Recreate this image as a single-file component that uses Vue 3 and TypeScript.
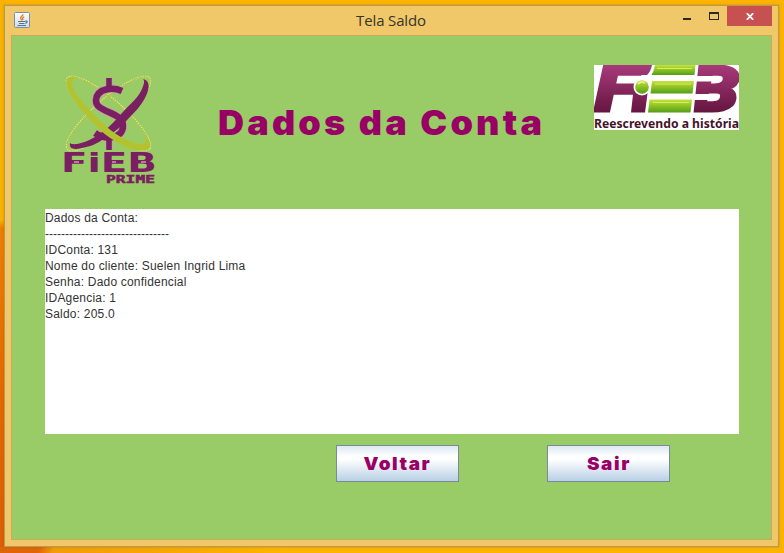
<script setup lang="ts">
interface Account {
  id: number
  client: string
  agency: number
  balance: string
}

const account: Account = { id: 131, client: 'Suelen Ingrid Lima', agency: 1, balance: '205.0' }

const rule = '-------------------------------'
const fields: string[] = [
  `IDConta: ${account.id}`,
  `Nome do cliente: ${account.client}`,
  'Senha: Dado confidencial',
  `IDAgencia: ${account.agency}`,
  `Saldo: ${account.balance}`,
]
const actions: string[] = ['Voltar', 'Sair']
</script>

<template>
  <div class="desktop">
    <div class="window">
      <header class="titlebar">
        <svg class="java" width="16" height="16" viewBox="0 0 16 16">
          <defs>
            <linearGradient id="tile" x1="0" y1="0" x2="0" y2="1">
              <stop offset="0" stop-color="#fdfdfd" />
              <stop offset="1" stop-color="#d3dbe3" />
            </linearGradient>
          </defs>
          <rect x=".5" y=".5" width="15" height="15" rx="1" fill="url(#tile)" stroke="#7891a8" />
          <path d="M9 2.200C9 4 6 4.800 6.700 6.600L8 8.500M10.200 4.800C8 5.800 8.300 6.500 9.200 8" fill="none" stroke="#e9772b" stroke-width="1.300" />
          <path d="M4 9.500h7M5 11.500h5.500M3.500 13.500h8.500M11 9.200c3-1 2.700 2 .3 2" fill="none" stroke="#55758e" stroke-width="1.200" />
        </svg>
        <span class="caption">Tela Saldo</span>
        <div class="controls">
          <span class="minimize"></span>
          <span class="maximize"></span>
          <span class="close">
            <svg width="8" height="7" viewBox="0 0 8 7">
              <path d="M.8.2 7.200 6.800M7.200.2.8 6.800" stroke="#fff" stroke-width="1.800" />
            </svg>
          </span>
        </div>
      </header>

      <main class="client">
        <section class="banner">
          <svg class="prime" width="96" height="112" viewBox="0 0 96 112">
            <g fill="none">
              <g stroke="#e3edb4" stroke-width="1.800" stroke-dasharray="1.500 1">
                <ellipse cx="45.500" cy="38.500" rx="54" ry="14" transform="rotate(-41 45.500 38.500)" />
                <ellipse cx="45.500" cy="38.500" rx="54" ry="14" transform="rotate(41 45.500 38.500)" />
              </g>
              <g stroke="#b3c32f" stroke-width="1">
                <ellipse cx="45.500" cy="38.500" rx="53.500" ry="13.500" transform="rotate(-41 45.500 38.500)" />
                <ellipse cx="45.500" cy="38.500" rx="53.500" ry="13.500" transform="rotate(41 45.500 38.500)" />
              </g>
              <path d="M46 3V13M46 62V75" stroke="#c79bb0" stroke-width="7" />
              <path d="M59 16C50 12 34 13 33 25C32 38 60 36 60 51C60 64 42 65 32 58" stroke="#c79bb0" stroke-width="8" />
              <path d="M46 3V13M46 62V75" stroke="#7a1f61" stroke-width="5.500" />
              <path d="M59 16C50 12 34 13 33 25C32 38 60 36 60 51C60 64 42 65 32 58" stroke="#7a1f61" stroke-width="6.500" />
            </g>
            <path d="M80 4C86 5 88 12 82 23C77 32 71 38 65 44C57 53 50 58 42 63C34 69 26 72 19 73C11 75 6 74 7 68C10 71 22 68 32 62C43 56 52 46 59 38C68 28 75 23 79 14C81 9 82 6 80 4Z" fill="#7a1f61" />
            <path d="M16 3C6 0 1 4 4 12C7 20 17 35 32 50C39 57 45 62 52 66C60 71 66 74 73 75C83 76 88 75 87 67L82 60C84 65 83 70 78 69C66 68 55 61 45 53C36 45 30 39 25 33C17 25 11 17 9.500 11C8 5 10 3 16 3Z" fill="#b3c32f" />
            <text class="prime-name" x="-2" y="96.500" textLength="96" lengthAdjust="spacingAndGlyphs">FiEB</text>
            <path d="M11 87H16M49 87H53M78 87H83" stroke="#c79bb0" stroke-width="1.500" />
            <text class="prime-tag" x="43" y="108" textLength="49" lengthAdjust="spacingAndGlyphs">PRIME</text>
          </svg>

          <h1>Dados da Conta</h1>

          <svg class="fieb" width="145" height="65" viewBox="0 0 145 65">
            <defs>
              <linearGradient id="wine" gradientUnits="userSpaceOnUse" x1="0" y1="0" x2="0" y2="48">
                <stop offset="0" stop-color="#a83a7c" />
                <stop offset="1" stop-color="#64153f" />
              </linearGradient>
              <linearGradient id="lime" x1="0" y1="0" x2="0" y2="1">
                <stop offset="0" stop-color="#c6e23c" />
                <stop offset=".35" stop-color="#9dcb28" />
                <stop offset="1" stop-color="#559d18" />
              </linearGradient>
            </defs>
            <rect width="145" height="65" fill="#fff" />
            <text class="mark" x="1" y="46" textLength="42" lengthAdjust="spacingAndGlyphs">F</text>
            <path d="M20 0H58Q57 6 53 10H18Z" fill="url(#wine)" />
            <text class="mark" x="96" y="46" textLength="49" lengthAdjust="spacingAndGlyphs">B</text>
            <path d="M39.500 25H54L51 47.500H37Z" fill="url(#wine)" />
            <path d="M90 0H104.500L99.500 48H90Z" fill="#fff" />
            <path d="M103 11H123Q127 13.500 123 16.500H101ZM101 29H122Q126 31.500 122 35H99Z" fill="#fff" />
            <circle cx="48" cy="22" r="8.500" fill="#fff" />
            <circle cx="48" cy="22" r="6.800" fill="url(#lime)" />
            <g fill="url(#lime)">
              <path d="M61 0H101.500L100.500 10H57.500Q60 6 61 0Z" />
              <path d="M58 16H100L98.500 28.500H56.500Z" />
              <path d="M55.500 34.500H98L96.500 47.500H54Z" />
            </g>
            <path d="M63 3.500H98M61 19H97M59 37.500H95" stroke="#d4ec66" stroke-width="1.200" />
            <path d="M44 19Q47 15.500 51 18" fill="none" stroke="#e4f18b" stroke-width="2" />
            <text class="slogan" x="0" y="63" textLength="145" lengthAdjust="spacingAndGlyphs">Reescrevendo a história</text>
          </svg>
        </section>

        <section class="report">
          <p>Dados da Conta:</p>
          <p class="rule">{{ rule }}</p>
          <p v-for="field in fields" :key="field">{{ field }}</p>
        </section>

        <nav class="actions">
          <button v-for="action in actions" :key="action" type="button">
            <span>{{ action }}</span>
          </button>
        </nav>
      </main>
    </div>
  </div>
</template>

<style>
body {
  margin: 0;
}
</style>

<style scoped>
.desktop {
  box-sizing: border-box;
  width: 784px;
  height: 553px;
  padding: 5px 5px 6px 4px;
  overflow: hidden;
  background:
    linear-gradient(115deg, #df6508 0 36px, #f29c07 50px, transparent 260px) 0 547px / 784px 6px no-repeat,
    linear-gradient(#f8b300 0 220px, #ef7f00 228px, #e56700 400px, #dc5d06) 0 0 / 5px 553px no-repeat,
    #fdb400;
}

.window {
  box-sizing: border-box;
  display: flex;
  flex-direction: column;
  height: 542px;
  padding: 0 6px 6px;
  border: 1px solid #b69a55;
  background: #f0c869;
  box-shadow: 0 0 2px #8a651580;
}

.titlebar {
  display: flex;
  align-items: flex-start;
  height: 29px;
}

.java {
  margin: 6px 0 0 3px;
}

.caption {
  flex: 1;
  padding: 4px 0 0 69px;
  color: #37342b;
  font: 15px/21px "Open Sans", sans-serif;
  text-align: center;
  letter-spacing: -.15px;
}

.controls {
  display: flex;
  align-items: flex-start;
}

.minimize {
  width: 8px;
  height: 2px;
  margin: 12px 18px 0 0;
  background: #292929;
}

.maximize {
  box-sizing: border-box;
  width: 10px;
  height: 8px;
  margin: 6px 8px 0 0;
  border: 1px solid #292929;
  border-top-width: 2px;
}

.close {
  display: flex;
  align-items: center;
  justify-content: center;
  width: 45px;
  height: 20px;
  background: #c75050;
}

.client {
  box-sizing: border-box;
  flex: 1;
  padding: 0 32px 0 33px;
  border: 1px solid #c4ae59;
  background: #99cc66;
}

.banner {
  display: flex;
  align-items: flex-start;
  height: 173px;
}

.prime {
  margin: 39px 0 0 18px;
}

h1 {
  flex: 1;
  margin: 65px 0 0 59px;
  color: #990066;
  font: 900 34px/44px Inter, sans-serif;
  letter-spacing: 3px;
  white-space: nowrap;
  transform: scaleX(1.06);
  transform-origin: left;
}

.fieb {
  margin-top: 29px;
}

.prime-name {
  fill: #7a1f61;
  font: bold 26px "DejaVu Sans", sans-serif;
}

.prime-tag {
  fill: #7a1f61;
  stroke: #7a1f61;
  stroke-width: .5px;
  font: bold 10px "DejaVu Sans Mono", monospace;
}

.mark {
  fill: url(#wine);
  stroke: url(#wine);
  stroke-width: 3px;
  font: italic 900 63px Roboto, sans-serif;
}

.slogan {
  fill: #451329;
  font: bold 12px "Noto Sans", sans-serif;
}

.report {
  box-sizing: border-box;
  height: 225px;
  padding-top: 1px;
  background: #fff;
}

p {
  height: 16px;
  margin: 0;
  color: #333;
  font: 12px/17px "Liberation Sans", sans-serif;
  letter-spacing: .2px;
  white-space: pre;
}

.rule {
  letter-spacing: 0;
}

.actions {
  display: flex;
  gap: 88px;
  padding: 11px 0 0 291px;
}

button {
  box-sizing: border-box;
  width: 123px;
  height: 37px;
  padding: 0;
  border: 1px solid #7a8a99;
  background: linear-gradient(#dde8f3, #fff 30%, #fff 38%, #b8cfe5);
  color: #990066;
  font: 900 18px/35px Inter, sans-serif;
  letter-spacing: 1.5px;
}

button span {
  display: inline-block;
  transform: scaleX(1.05);
}
</style>
